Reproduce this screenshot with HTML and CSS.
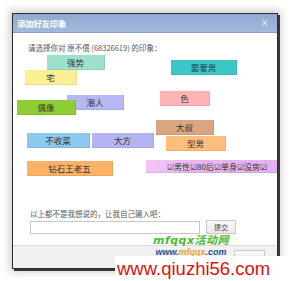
FILE: index.html
```html
<!DOCTYPE html>
<html>
<head>
<meta charset="utf-8">
<link rel="stylesheet" href="styles.css">
</head>
<body>
<div class="page">
  <div class="dialog">
    <div class="titlebar">
      <span class="title">添加好友印象</span>
      <span class="close">×</span>
    </div>
    <div class="body">
      <div class="prompt">请选择你对 原不偎 (68326619) 的印象：</div>
      <div class="cloud">
        <span class="tag t-qiang" style="left:34px;top:0px">强势</span>
        <span class="tag t-zhai" style="left:12px;top:15px">宅</span>
        <span class="tag t-qi" style="left:158px;top:5px">要奢男</span>
        <span class="tag t-se" style="left:147px;top:36px">色</span>
        <span class="tag t-chao" style="left:54px;top:40px">潮人</span>
        <span class="tag t-ou" style="left:4px;top:45px">偶像</span>
        <span class="tag t-dashu" style="left:143px;top:65px">大叔</span>
        <span class="tag t-bu" style="left:14px;top:78px">不收菜</span>
        <span class="tag t-dafang" style="left:79px;top:78px">大方</span>
        <span class="tag t-xing" style="left:153px;top:81px">型男</span>
        <span class="tag t-long" style="left:133px;top:105px">☑男性☑80后☑单身☑没房☑</span>
        <span class="tag t-zuan" style="left:14px;top:106px">钻石王老五</span>
      </div>
      <div class="custom">
        <div class="custom-label">以上都不是我想说的，让我自己输入吧：</div>
        <div class="custom-row">
          <div class="input"></div>
          <div class="btn">提交</div>
        </div>
      </div>
    </div>
    <div class="footer">
      <div class="btn cancel"></div>
    </div>
  </div>
  <div class="wm">
    <div class="wm-logo">mfqqx活动网</div>
    <div class="wm-url">www.<span>mfqqx</span>.com</div>
  </div>
  <div class="site">www.qiuzhi56.com</div>
</div>
</body>
</html>
```

FILE: styles.css
```css
* { box-sizing: border-box; }
html, body { margin: 0; padding: 0; background: #fff; }
body { font-family: "Noto Sans CJK SC", "Noto Sans", sans-serif; }

.page {
  position: relative;
  width: 290px;
  height: 281px;
  overflow: hidden;
  padding: 13px 0 0 12px;
}

.dialog {
  width: 266px;
  height: 256px;
  border: 1px solid #2d2d2d;
  background: #fff;
  display: flex;
  flex-direction: column;
  box-shadow: 2px 2px 0 #3a3a3a, 0 0 8px 3px rgba(0,0,0,0.18);
}

.titlebar {
  height: 19px;
  flex: none;
  background: linear-gradient(#8ea9d2, #a4badc);
  border-bottom: 1px solid #8aa0c4;
  display: flex;
  align-items: center;
  justify-content: space-between;
  padding: 0 8px 0 4px;
}
.title {
  color: #fff;
  font-family: "Liberation Serif", "Noto Sans CJK SC", serif;
  font-weight: bold;
  font-size: 8.5px;
  letter-spacing: -0.3px;
}
.close {
  color: #dfe8f5;
  font-size: 10px;
  line-height: 1;
  font-family: "DejaVu Sans", sans-serif;
}

.body {
  flex: 1;
  display: flex;
  flex-direction: column;
  overflow: hidden;
}
.prompt {
  font-size: 7.5px;
  color: #555;
  padding: 9px 0 0 15px;
  height: 22px;
  white-space: nowrap;
}
.cloud {
  position: relative;
  height: 148px;
  flex: none;
}
.tag {
  position: absolute;
  height: 15px;
  font-size: 8.5px;
  line-height: 15px;
  color: #333;
  text-align: center;
  white-space: nowrap;
  border-right: 1px solid rgba(0,0,0,0.08);
  border-bottom: 1px solid rgba(0,0,0,0.08);
}
.t-qiang { width: 58px; background: #9fe0cd; }
.t-zhai { width: 52px; background: #fbef94; }
.t-qi { width: 66px; background: #3cc7c7; color: #245; }
.t-se { width: 50px; background: #ffb3b5; }
.t-chao { width: 57px; background: #b7b7f3; }
.t-ou { width: 59px; background: #8fcd35; }
.t-dashu { width: 58px; background: #dba582; }
.t-bu { width: 63px; background: #8cc9ef; }
.t-dafang { width: 62px; background: #b5b4f2; }
.t-xing { width: 60px; background: #fbbe7c; }
.t-long {
  width: 140px;
  height: 13px;
  line-height: 13px;
  text-align: left;
  padding-left: 21px;
  font-size: 8px;
  background: linear-gradient(90deg, #f4c6f2, #e6b4ef 40%, #e2b1ee);
}
.t-zuan { width: 86px; background: #ffb266; }

.custom {
  padding: 5px 0 0 17px;
}
.custom-label {
  font-size: 7.5px;
  color: #555;
  white-space: nowrap;
  height: 12px;
}
.custom-row {
  display: flex;
  align-items: center;
  gap: 6px;
}
.input {
  width: 170px;
  height: 13px;
  border: 1px solid #c8c8c8;
  background: #fff;
}
.btn {
  width: 30px;
  height: 14px;
  border: 1px solid #c9c9c9;
  background: linear-gradient(#fafafa, #e9e9e9);
  font-size: 7px;
  color: #444;
  text-align: center;
  line-height: 12px;
}

.footer {
  height: 23px;
  flex: none;
  background: #f1f1f1;
  border-top: 1px solid #dcdcdc;
  display: flex;
  justify-content: flex-end;
  padding: 4px 12px 0 0;
}
.cancel { width: 31px; height: 12px; }

.wm {
  position: absolute;
  left: 145px;
  top: 235px;
  width: 92px;
  text-align: center;
}
.wm-logo {
  font-family: "DejaVu Sans", "Noto Sans CJK SC", sans-serif;
  font-weight: bold;
  font-style: italic;
  font-size: 11px;
  line-height: 12px;
  color: #4dbb32;
  letter-spacing: 0.5px;
}
.wm-url {
  font-family: "Liberation Sans", sans-serif;
  font-weight: bold;
  font-style: italic;
  font-size: 9px;
  line-height: 10px;
  color: #2b4c9b;
}
.wm-url span { color: #f0a030; }

.site {
  position: absolute;
  left: 115px;
  top: 256px;
  width: 175px;
  height: 25px;
  background: #fff;
  color: #e01010;
  font-family: "Liberation Sans", sans-serif;
  font-size: 18.5px;
  line-height: 25px;
  padding-left: 2px;
  white-space: nowrap;
}
```
